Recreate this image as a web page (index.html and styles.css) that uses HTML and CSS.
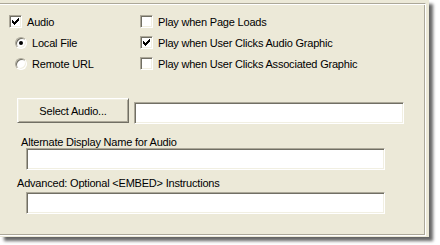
FILE: index.html
```html
<!DOCTYPE html>
<html lang="en">
<head>
    <meta charset="UTF-8">
    <title>Audio Properties</title>
    <link rel="stylesheet" href="styles.css">
</head>
<body>
    <div class="panel">
        <div class="group">
            <div class="options">
                <div class="col col-left">
                    <label class="opt">
                        <span class="box checked">
                            <svg width="13" height="13" viewBox="0 0 13 13" shape-rendering="crispEdges"><path d="M3 5h1v3h-1zM4 6h1v3h-1zM5 7h1v3h-1zM6 6h1v3h-1zM7 5h1v3h-1zM8 4h1v3h-1zM9 3h1v3h-1z" fill="#000"/></svg>
                        </span>
                        Audio
                    </label>
                    <label class="opt indent"><span class="radio on"></span>Local File</label>
                    <label class="opt indent"><span class="radio"></span>Remote URL</label>
                </div>
                <div class="col">
                    <label class="opt"><span class="box"></span>Play when Page Loads</label>
                    <label class="opt">
                        <span class="box checked">
                            <svg width="13" height="13" viewBox="0 0 13 13" shape-rendering="crispEdges"><path d="M3 5h1v3h-1zM4 6h1v3h-1zM5 7h1v3h-1zM6 6h1v3h-1zM7 5h1v3h-1zM8 4h1v3h-1zM9 3h1v3h-1z" fill="#000"/></svg>
                        </span>
                        Play when User Clicks Audio Graphic
                    </label>
                    <label class="opt"><span class="box"></span>Play when User Clicks Associated Graphic</label>
                </div>
            </div>

            <div class="file-row">
                <button class="btn">Select Audio...</button>
                <div class="field field-file"></div>
            </div>

            <div class="caption caption-name">Alternate Display Name for Audio</div>
            <div class="field field-wide"></div>

            <div class="caption caption-embed">Advanced: Optional &lt;EMBED&gt; Instructions</div>
            <div class="field field-wide field-embed"></div>
        </div>
    </div>
</body>
</html>
```

FILE: styles.css
```css
body {
    margin: 0;
    padding-bottom: 8px;
    background-color: #fff;
    font-family: "Liberation Sans", Arial, sans-serif;
    font-size: 11px;
    letter-spacing: -0.2px;
    color: #000;
}
.panel {
    width: 429px;
    height: 237px;
    padding-top: 3px;
    box-sizing: border-box;
    background-color: #ece9d8;
    box-shadow: 4px 4px 3px rgba(0, 0, 0, 0.6);
}
/* etched group frame, left side runs off the window */
.group {
    margin-left: -2px;
    width: 428px;
    height: 233px;
    box-sizing: border-box;
    border-top: 1px solid #aca899;
    border-right: 1px solid #fff;
    border-bottom: 1px solid #fff;
    box-shadow: inset 0 1px #fff, inset -1px -1px #aca899;
}
.options {
    display: flex;
    margin-top: 7px;
    padding-left: 11px;
}
.col {
    display: flex;
    flex-direction: column;
}
.col-left {
    width: 131px;
}
.opt {
    display: flex;
    align-items: center;
    height: 21px;
    gap: 5px;
    white-space: nowrap;
}
.opt.indent {
    padding-left: 6px;
}
.box {
    width: 13px;
    height: 13px;
    flex: none;
    box-sizing: border-box;
    background-color: #fff;
    border: 1px solid;
    border-color: #aca899 #fff #fff #aca899;
    box-shadow: inset 1px 1px #716f64, inset -1px -1px #f1efe2;
    position: relative;
}
.box svg {
    position: absolute;
    left: -1px;
    top: -1px;
}
.radio {
    width: 12px;
    height: 12px;
    flex: none;
    box-sizing: border-box;
    border-radius: 50%;
    background-color: #fff;
    border: 1px solid;
    border-color: #aca899 #fff #fff #aca899;
    box-shadow: inset 1px 1px #716f64, inset -1px -1px #f1efe2;
    position: relative;
}
.radio.on::after {
    content: "";
    position: absolute;
    left: 3px;
    top: 3px;
    width: 4px;
    height: 4px;
    border-radius: 50%;
    background-color: #000;
}
.file-row {
    display: flex;
    align-items: flex-start;
    margin-top: 24px;
    padding-left: 19px;
}
.btn {
    width: 112px;
    height: 25px;
    padding: 0;
    font: inherit;
    letter-spacing: inherit;
    color: #000;
    background-color: #ece9d8;
    border: 1px solid;
    border-color: #fff #716f64 #716f64 #fff;
    box-shadow: inset 1px 1px #f1efe2, inset -1px -1px #aca899;
}
.field {
    height: 22px;
    box-sizing: border-box;
    background-color: #fff;
    border: 1px solid;
    border-color: #aca899 #fff #fff #aca899;
    box-shadow: inset 1px 1px #716f64, inset -1px -1px #f1efe2;
}
.field-file {
    width: 270px;
    margin-left: 5px;
    margin-top: 4px;
}
.caption {
    line-height: 12px;
    white-space: nowrap;
}
.caption-name {
    margin-top: 12px;
    padding-left: 23px;
}
.caption-embed {
    margin-top: 7px;
    padding-left: 19px;
}
.field-wide {
    width: 359px;
    margin-left: 28px;
}
.field-embed {
    margin-top: 3px;
}
```
